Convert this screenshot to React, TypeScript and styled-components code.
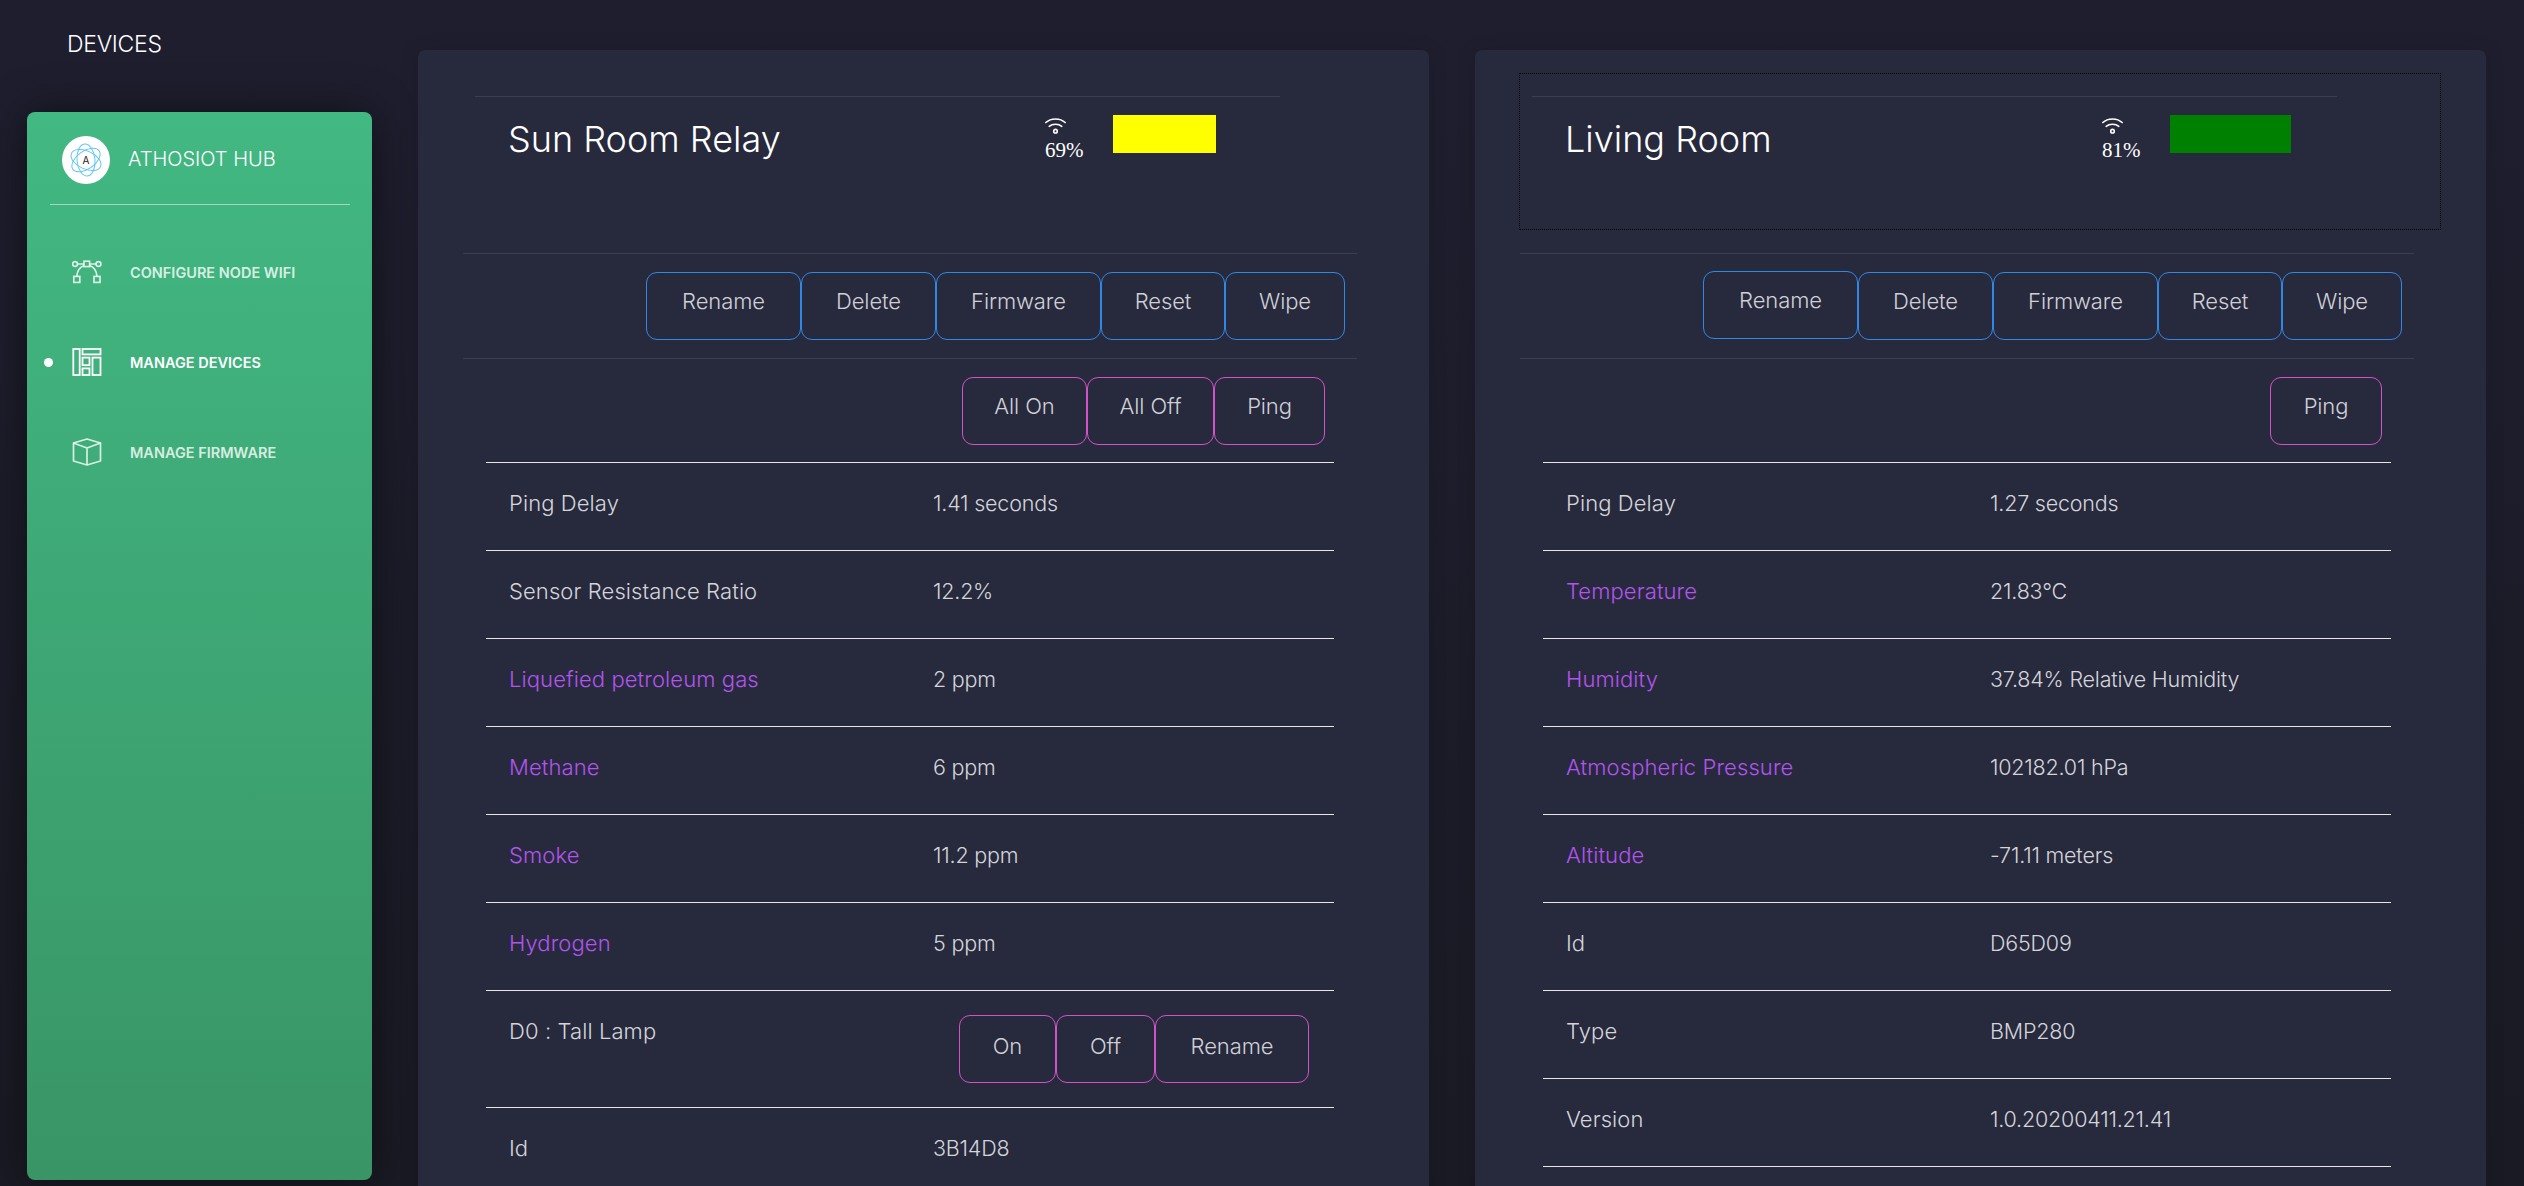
import React from "react";
import styled, { createGlobalStyle } from "styled-components";

const GlobalStyle = createGlobalStyle`
  html, body {
    margin: 0;
    padding: 0;
    height: 100%;
    background: #1e1e2c;
  }
  * {
    box-sizing: border-box;
  }
`;

interface ActionButton {
  label: string;
  width: number;
  raised?: boolean;
}

interface Reading {
  label: string;
  value?: string;
  sensor?: boolean;
  buttons?: ActionButton[];
}

interface Device {
  name: string;
  signal: string;
  barColor: string;
  barWidth: number;
  focused?: boolean;
  controls: ActionButton[];
  readings: Reading[];
}

const devices: Device[] = [
  {
    name: "Sun Room Relay",
    signal: "69%",
    barColor: "#ffff00",
    barWidth: 103,
    controls: [
      { label: "All On", width: 125 },
      { label: "All Off", width: 127 },
      { label: "Ping", width: 111 },
    ],
    readings: [
      { label: "Ping Delay", value: "1.41 seconds" },
      { label: "Sensor Resistance Ratio", value: "12.2%" },
      { label: "Liquefied petroleum gas", value: "2 ppm", sensor: true },
      { label: "Methane", value: "6 ppm", sensor: true },
      { label: "Smoke", value: "11.2 ppm", sensor: true },
      { label: "Hydrogen", value: "5 ppm", sensor: true },
      {
        label: "D0 : Tall Lamp",
        buttons: [
          { label: "On", width: 97 },
          { label: "Off", width: 99 },
          { label: "Rename", width: 154 },
        ],
      },
      { label: "Id", value: "3B14D8" },
    ],
  },
  {
    name: "Living Room",
    signal: "81%",
    barColor: "#008000",
    barWidth: 121,
    focused: true,
    controls: [{ label: "Ping", width: 112 }],
    readings: [
      { label: "Ping Delay", value: "1.27 seconds" },
      { label: "Temperature", value: "21.83°C", sensor: true },
      { label: "Humidity", value: "37.84% Relative Humidity", sensor: true },
      { label: "Atmospheric Pressure", value: "102182.01 hPa", sensor: true },
      { label: "Altitude", value: "-71.11 meters", sensor: true },
      { label: "Id", value: "D65D09" },
      { label: "Type", value: "BMP280" },
      { label: "Version", value: "1.0.20200411.21.41" },
    ],
  },
];

const managementButtons = (raised: boolean): ActionButton[] => [
  { label: "Rename", width: 155, raised },
  { label: "Delete", width: 135 },
  { label: "Firmware", width: 165 },
  { label: "Reset", width: 124 },
  { label: "Wipe", width: 120 },
];

const BezierIcon = () => (
  <svg width="30" height="24" viewBox="0 0 30 24" fill="none" stroke="currentColor" strokeWidth="1.7">
    <circle cx="3" cy="4" r="2.4" />
    <circle cx="26.5" cy="4" r="2.4" />
    <rect x="12" y="1.2" width="5.6" height="5.4" />
    <rect x="1.8" y="16.4" width="6" height="6" />
    <rect x="22" y="16.4" width="6" height="6" />
    <path d="M5.4 4H12M17.6 4h6.7M12 5.5C8 7 5.2 11 4.8 16.4M17.6 5.5C21.6 7 24.6 11 25 16.4" />
  </svg>
);

const LayoutIcon = () => (
  <svg width="30" height="28" viewBox="0 0 30 28" fill="none" stroke="currentColor" strokeWidth="1.8">
    <rect x="1.3" y="1" width="6.4" height="26" />
    <rect x="10.5" y="1" width="18" height="5.4" />
    <rect x="10.5" y="9.6" width="7" height="7.6" />
    <rect x="10.5" y="20.4" width="7" height="6.6" />
    <rect x="20.5" y="9.6" width="8" height="17.4" />
  </svg>
);

const CubeIcon = () => (
  <svg width="30" height="28" viewBox="0 0 30 28" fill="none" stroke="currentColor" strokeWidth="1.7" strokeLinejoin="round">
    <path d="M15 1l13.5 4v18L15 27 1.5 23V5z" />
    <path d="M1.5 5L15 10l13.5-5M15 10v17" />
  </svg>
);

const WifiIcon = () => (
  <svg width="21" height="17" viewBox="0 0 20 16" fill="none" stroke="#fff" strokeWidth="1.5" strokeLinecap="round">
    <path d="M0.8 5.2C5.5 0.6 14.5 0.6 19.2 5.2" />
    <path d="M4 8.8C7 6.2 13 6.2 16 8.8" />
    <circle cx="10" cy="13.4" r="1.7" />
  </svg>
);

const AtomLogo = () => (
  <svg width="34" height="34" viewBox="0 0 34 34" fill="none" stroke="#62c6f2" strokeWidth="1">
    <ellipse cx="17" cy="17" rx="16" ry="9" transform="rotate(25 17 17)" />
    <ellipse cx="17" cy="17" rx="16" ry="9" transform="rotate(85 17 17)" />
    <ellipse cx="17" cy="17" rx="16" ry="9" transform="rotate(145 17 17)" />
    <text x="17" y="21" fontFamily="Inter, sans-serif" fontSize="10" fill="#222" stroke="none" textAnchor="middle">
      A
    </text>
  </svg>
);

const navItems = [
  { label: "Configure Node Wifi", icon: <BezierIcon /> },
  { label: "Manage Devices", icon: <LayoutIcon />, active: true },
  { label: "Manage Firmware", icon: <CubeIcon /> },
];

const App = () => (
  <Page>
    <GlobalStyle />
    <LeftColumn>
      <PageTitle>DEVICES</PageTitle>
      <Sidebar>
        <Brand>
          <LogoBadge>
            <AtomLogo />
          </LogoBadge>
          <BrandName>ATHOSIOT HUB</BrandName>
        </Brand>
        <Nav>
          {navItems.map((item) => (
            <NavItem key={item.label} $active={item.active}>
              <NavIcon>{item.icon}</NavIcon>
              {item.label}
            </NavItem>
          ))}
        </Nav>
      </Sidebar>
    </LeftColumn>
    <Main>
      {devices.map((device) => (
        <Panel key={device.name}>
          <HeaderBox $focused={device.focused}>
            <HeaderRow>
              <DeviceName>{device.name}</DeviceName>
              <Signal>
                <WifiIcon />
                <SignalText>{device.signal}</SignalText>
              </Signal>
              <SignalBar $color={device.barColor} $width={device.barWidth} />
            </HeaderRow>
          </HeaderBox>
          <ActionBar $inset={12}>
            {managementButtons(!!device.focused).map((button) => (
              <Button key={button.label} $tone="blue" $width={button.width} $raised={button.raised}>
                {button.label}
              </Button>
            ))}
          </ActionBar>
          <ActionBar $inset={32}>
            {device.controls.map((button) => (
              <Button key={button.label} $tone="pink" $width={button.width}>
                {button.label}
              </Button>
            ))}
          </ActionBar>
          <ReadingTable>
            {device.readings.map((reading) => (
              <ReadingRow key={reading.label} $tall={!!reading.buttons}>
                <ReadingLabel $sensor={reading.sensor}>{reading.label}</ReadingLabel>
                {reading.buttons ? (
                  <RowButtons>
                    {reading.buttons.map((button) => (
                      <Button key={button.label} $tone="pink" $width={button.width} $lowText>
                        {button.label}
                      </Button>
                    ))}
                  </RowButtons>
                ) : (
                  <ReadingValue>{reading.value}</ReadingValue>
                )}
              </ReadingRow>
            ))}
          </ReadingTable>
        </Panel>
      ))}
    </Main>
  </Page>
);

export default App;

const Page = styled.div`
  display: flex;
  height: 1186px;
  overflow: hidden;
  background: linear-gradient(#1e1e2f, #1a1a24);
  font-family: Inter, "Open Sans", sans-serif;
`;

const LeftColumn = styled.aside`
  flex: none;
  width: 418px;
  padding-left: 27px;
  display: flex;
  flex-direction: column;
`;

const PageTitle = styled.div`
  height: 112px;
  padding: 30px 0 0 40px;
  font-size: 23px;
  line-height: 28px;
  font-weight: 300;
  color: #fff;
  letter-spacing: -0.3px;
`;

const Sidebar = styled.nav`
  width: 345px;
  height: 1068px;
  border-radius: 8px;
  background: linear-gradient(#42b883, #399565);
  box-shadow: 0 0 45px rgba(0, 0, 0, 0.45);
`;

const Brand = styled.div`
  margin: 0 22px 0 23px;
  height: 93px;
  padding: 24px 0 0 12px;
  display: flex;
  align-items: flex-start;
  gap: 18px;
  border-bottom: 1px solid rgba(255, 255, 255, 0.5);
`;

const LogoBadge = styled.div`
  flex: none;
  width: 48px;
  height: 48px;
  border-radius: 50%;
  background: #fff;
  display: flex;
  align-items: center;
  justify-content: center;
`;

const BrandName = styled.div`
  font-size: 20px;
  line-height: 47px;
  font-weight: 300;
  color: #fff;
  white-space: nowrap;
`;

const Nav = styled.div`
  padding-top: 22px;
  display: flex;
  flex-direction: column;
`;

const NavItem = styled.div<{ $active?: boolean }>`
  position: relative;
  height: 90px;
  padding-left: 45px;
  display: flex;
  align-items: center;
  gap: 28px;
  font-size: 14.5px;
  font-weight: 600;
  text-transform: uppercase;
  color: ${({ $active }) => ($active ? "#fff" : "rgba(255, 255, 255, 0.8)")};

  ${({ $active }) =>
    $active &&
    `&::before {
      content: "";
      position: absolute;
      left: 17px;
      top: 41px;
      width: 9px;
      height: 9px;
      border-radius: 50%;
      background: #fff;
    }`}
`;

const NavIcon = styled.span`
  flex: none;
  width: 30px;
  display: flex;
  justify-content: center;
`;

const Main = styled.main`
  flex: none;
  width: 2106px;
  padding-top: 50px;
  display: flex;
  align-items: flex-start;
  gap: 46px;
`;

const Panel = styled.section`
  flex: none;
  width: 1011px;
  min-height: 1200px;
  padding-top: 23px;
  border-radius: 7px;
  background: #27293d;
  box-shadow: 0 1px 20px rgba(0, 0, 0, 0.12);
`;

const HeaderBox = styled.div<{ $focused?: boolean }>`
  width: 922px;
  height: 157px;
  margin: 0 0 23px 44px;
  padding-top: 23px;
  outline: ${({ $focused }) => ($focused ? "1px dotted #000" : "none")};
  outline-offset: -1px;
`;

const HeaderRow = styled.div`
  width: 805px;
  margin-left: 13px;
  padding: 18px 0 0 33px;
  display: flex;
  align-items: flex-start;
  border-top: 1px solid rgba(255, 255, 255, 0.1);
`;

const DeviceName = styled.h2`
  flex: none;
  width: 537px;
  margin: 0;
  font-size: 36px;
  line-height: 48px;
  font-weight: 300;
  color: #fff;
`;

const Signal = styled.div`
  flex: none;
  width: 68px;
  padding-top: 2px;
  display: flex;
  flex-direction: column;
  align-items: flex-start;
`;

const SignalText = styled.span`
  margin-top: 4px;
  font-family: "Liberation Serif", serif;
  font-size: 21px;
  line-height: 24px;
  color: #fff;
`;

const SignalBar = styled.div<{ $color: string; $width: number }>`
  flex: none;
  height: 38px;
  width: ${({ $width }) => $width}px;
  background: ${({ $color }) => $color};
`;

const ActionBar = styled.div<{ $inset: number }>`
  width: 894px;
  height: 105px;
  margin-left: 45px;
  padding: 18px ${({ $inset }) => $inset}px 0 0;
  display: flex;
  justify-content: flex-end;
  align-items: flex-start;
  border-top: 1px solid rgba(255, 255, 255, 0.1);
`;

const Button = styled.button<{
  $tone: "blue" | "pink";
  $width: number;
  $raised?: boolean;
  $lowText?: boolean;
}>`
  flex: none;
  width: ${({ $width }) => $width}px;
  height: 68px;
  padding: 0 0 ${({ $lowText }) => ($lowText ? "6px" : "10px")};
  border: 1px solid ${({ $tone }) => ($tone === "blue" ? "#2f88e6" : "#d452c8")};
  border-radius: 11px;
  background: transparent;
  color: #d0d1d7;
  font-family: inherit;
  font-size: 22px;
  font-weight: 300;
  letter-spacing: -0.1px;
  transform: ${({ $raised }) => ($raised ? "translateY(-1px)" : "none")};
`;

const ReadingTable = styled.div`
  width: 848px;
  margin: -1px 0 0 68px;
  border-top: 1px solid #e6e6ea;
`;

const ReadingRow = styled.div<{ $tall: boolean }>`
  display: grid;
  grid-template-columns: 424px 424px;
  height: ${({ $tall }) => ($tall ? "117px" : "88px")};
  border-bottom: 1px solid #e6e6ea;
`;

const ReadingLabel = styled.div<{ $sensor?: boolean }>`
  padding: 26px 0 0 23px;
  font-size: 22px;
  line-height: 28px;
  font-weight: 300;
  letter-spacing: 0.1px;
  color: ${({ $sensor }) => ($sensor ? "#b354ee" : "#d4d5da")};
`;

const ReadingValue = styled(ReadingLabel)`
  font-size: 21.5px;
  letter-spacing: -0.2px;
  color: #d4d5da;
`;

const RowButtons = styled.div`
  padding: 24px 25px 0 0;
  display: flex;
  justify-content: flex-end;
  align-items: flex-start;
`;
